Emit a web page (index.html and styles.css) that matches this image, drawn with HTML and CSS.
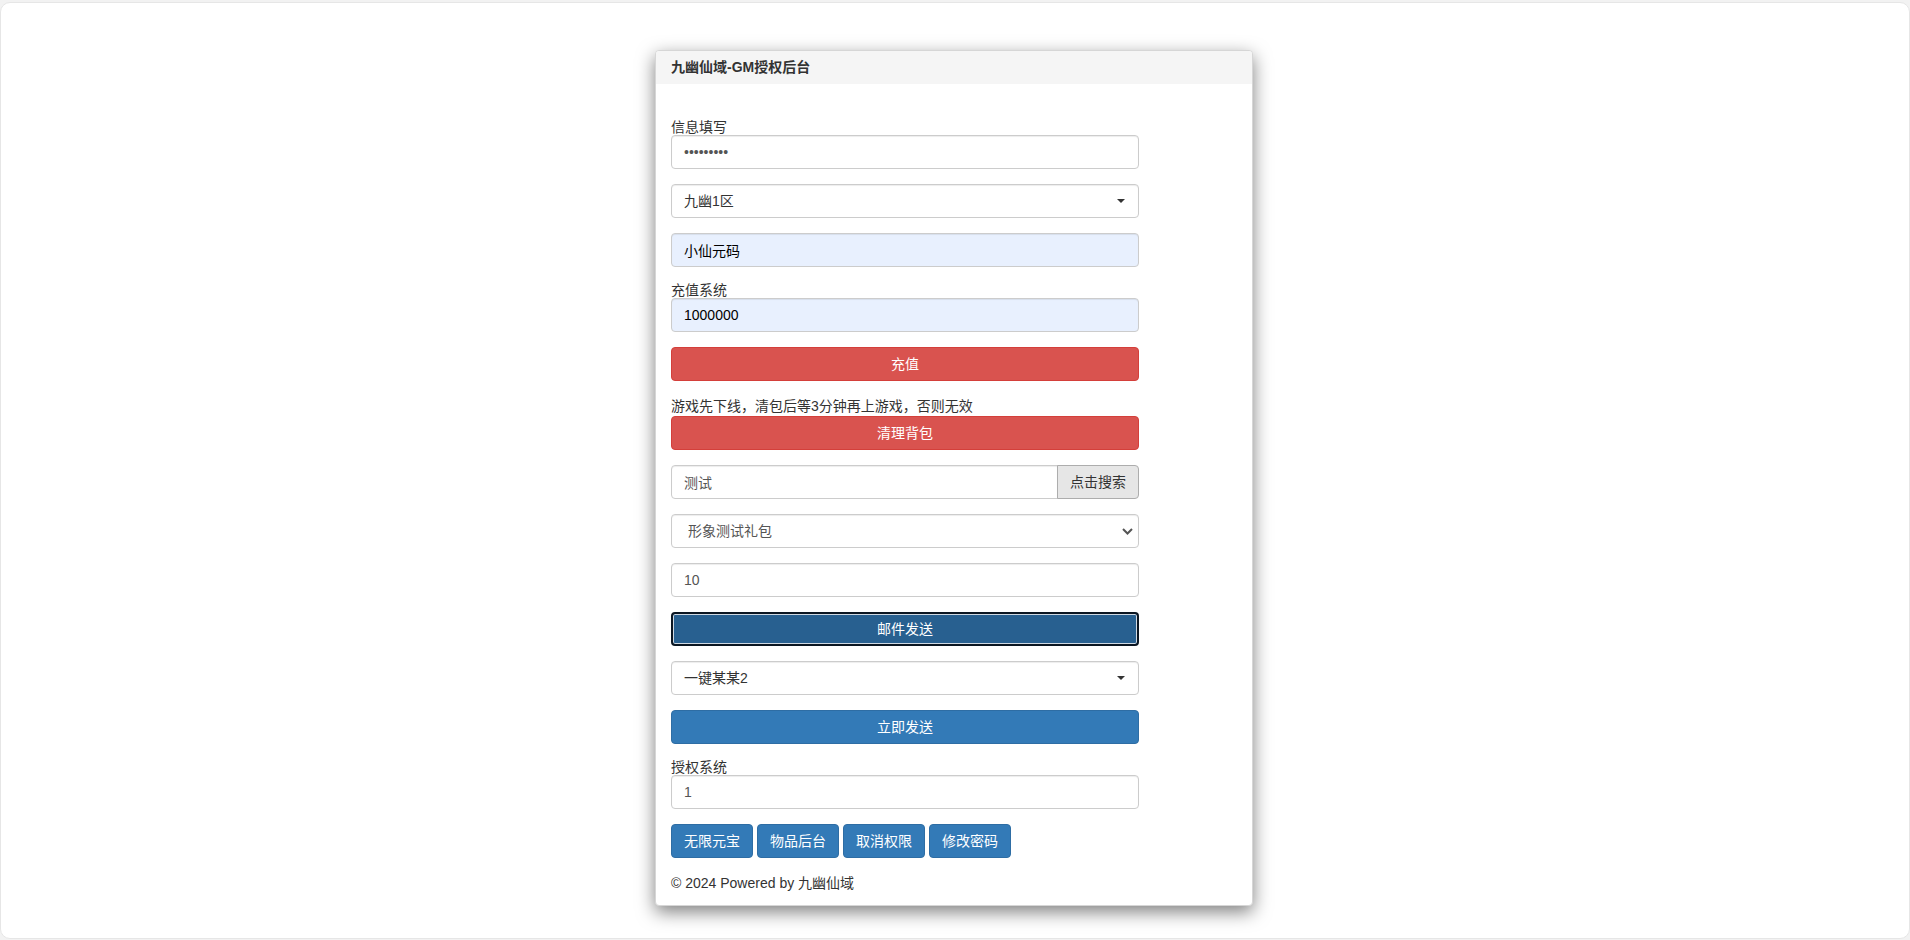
FILE: index.html
```html
<!DOCTYPE html>
<html lang="zh-CN">
<head>
    <meta charset="UTF-8">
    <meta name="viewport" content="width=device-width, initial-scale=1.0">
    <link rel="stylesheet" href="styles.css">
    <title>九幽仙域-GM授权后台</title>
</head>
<body>
    <div class="page">
        <div class="panel">
            <div class="panel-heading">九幽仙域-GM授权后台</div>
            <div class="panel-body">
                <form class="gm-form" onsubmit="return false;">
                    <div class="form-group">
                        <label for="password">信息填写</label>
                        <input id="password" type="password" class="form-control" value="123456789">
                    </div>
                    <div class="form-group">
                        <div class="form-control picker">
                            <span>九幽1区</span>
                            <span class="caret"></span>
                        </div>
                    </div>
                    <div class="form-group">
                        <input type="text" class="form-control autofill" value="小仙元码">
                    </div>
                    <div class="form-group">
                        <label for="amount">充值系统</label>
                        <input id="amount" type="text" class="form-control autofill" value="1000000">
                    </div>
                    <div class="form-group">
                        <button class="btn btn-danger btn-block">充值</button>
                    </div>
                    <div class="form-group">
                        <p class="tip">游戏先下线，清包后等3分钟再上游戏，否则无效</p>
                        <button class="btn btn-danger btn-block">清理背包</button>
                    </div>
                    <div class="form-group">
                        <div class="input-group">
                            <input type="text" class="form-control" value="测试">
                            <button class="btn btn-addon">点击搜索</button>
                        </div>
                    </div>
                    <div class="form-group select-wrap">
                        <select class="form-control native-select">
                            <option>形象测试礼包</option>
                        </select>
                        <svg class="chevron" width="11" height="7" viewBox="0 0 11 7">
                            <polyline points="1,1 5.5,5.5 10,1" fill="none" stroke="#555" stroke-width="2"/>
                        </svg>
                    </div>
                    <div class="form-group">
                        <input type="text" class="form-control" value="10">
                    </div>
                    <div class="form-group">
                        <button class="btn btn-primary btn-block focused">邮件发送</button>
                    </div>
                    <div class="form-group">
                        <div class="form-control picker">
                            <span>一键某某2</span>
                            <span class="caret"></span>
                        </div>
                    </div>
                    <div class="form-group">
                        <button class="btn btn-primary btn-block">立即发送</button>
                    </div>
                    <div class="form-group">
                        <label for="auth">授权系统</label>
                        <input id="auth" type="text" class="form-control" value="1">
                    </div>
                    <div class="btn-row">
                        <button class="btn btn-primary">无限元宝</button>
                        <button class="btn btn-primary">物品后台</button>
                        <button class="btn btn-primary">取消权限</button>
                        <button class="btn btn-primary">修改密码</button>
                    </div>
                </form>
                <p class="footer">© 2024 Powered by 九幽仙域</p>
            </div>
        </div>
    </div>
</body>
</html>
```

FILE: styles.css
```css
html {
    background-color: #f2f2f2;
}

body {
    margin: 0;
    padding: 0;
    font-family: "Liberation Sans", Arial, "Noto Sans CJK SC", sans-serif;
    font-size: 14px;
    line-height: 1.42857;
    color: #333;
}

.page {
    margin-top: 2px;
    height: 937px;
    background-color: #fff;
    border: 1px solid #e6e6e6;
    border-radius: 10px;
    box-sizing: border-box;
    padding: 47px 2px 0 0;
}

.panel {
    width: 598px;
    margin: 0 auto;
    box-sizing: border-box;
    background-color: #fff;
    border: 1px solid #d6d6d6;
    border-radius: 4px;
    box-shadow: 0 6px 18px rgba(0, 0, 0, 0.5);
}

.panel-heading {
    padding: 8px 15px;
    line-height: 17px;
    font-weight: bold;
    color: #333;
    background-color: #f5f5f5;
    border-radius: 3px 3px 0 0;
}

.panel-body {
    padding: 15px 15px 12px;
}

.gm-form {
    width: 468px;
    margin-top: 20px;
}

.form-group {
    margin-bottom: 15px;
}

label {
    display: block;
    margin: 0;
    line-height: 16px;
    font-weight: normal;
}

.tip {
    margin: 0;
    line-height: 20px;
}

.form-control {
    display: block;
    width: 100%;
    height: 34px;
    padding: 6px 12px;
    box-sizing: border-box;
    font-family: inherit;
    font-size: 14px;
    line-height: 20px;
    color: #555;
    background-color: #fff;
    border: 1px solid #ccc;
    border-radius: 4px;
    box-shadow: inset 0 1px 1px rgba(0, 0, 0, 0.075);
}

.form-control.autofill {
    background-color: #e8f0fe;
    color: #000;
}

.picker {
    display: flex;
    align-items: center;
    justify-content: space-between;
    color: #333;
    padding-right: 13px;
}

.caret {
    width: 0;
    height: 0;
    border-top: 4px solid #333;
    border-left: 4px solid transparent;
    border-right: 4px solid transparent;
}

.select-wrap {
    position: relative;
}

.native-select {
    appearance: none;
    -webkit-appearance: none;
    padding-left: 16px;
    color: #555;
}

.chevron {
    position: absolute;
    right: 6px;
    top: 14px;
}

.input-group {
    display: flex;
}

.input-group .form-control {
    flex: 1;
    border-radius: 4px 0 0 4px;
}

.btn {
    display: inline-block;
    height: 34px;
    padding: 6px 12px;
    box-sizing: border-box;
    font-family: inherit;
    font-size: 14px;
    line-height: 20px;
    text-align: center;
    border: 1px solid transparent;
    border-radius: 4px;
    cursor: pointer;
}

.btn-block {
    display: block;
    width: 100%;
}

.btn-danger {
    color: #fff;
    background-color: #d9534f;
    border-color: #d43f3a;
}

.btn-primary {
    color: #fff;
    background-color: #337ab7;
    border-color: #2e6da4;
}

.btn-primary.focused {
    background-color: #286090;
    border: 2px solid #0b1622;
    box-shadow: inset 0 0 0 1px #cfd9e3;
    padding-top: 5px;
}

.btn-addon {
    width: 82px;
    margin-left: -1px;
    color: #333;
    background-color: #e6e6e6;
    border-color: #adadad;
    border-radius: 0 4px 4px 0;
    padding: 6px 0;
}

.btn-row {
    display: flex;
    gap: 4px;
}

.btn-row .btn {
    width: 82px;
    padding: 6px 0;
}

.footer {
    margin: 15px 0 0;
    line-height: 20px;
}
```
